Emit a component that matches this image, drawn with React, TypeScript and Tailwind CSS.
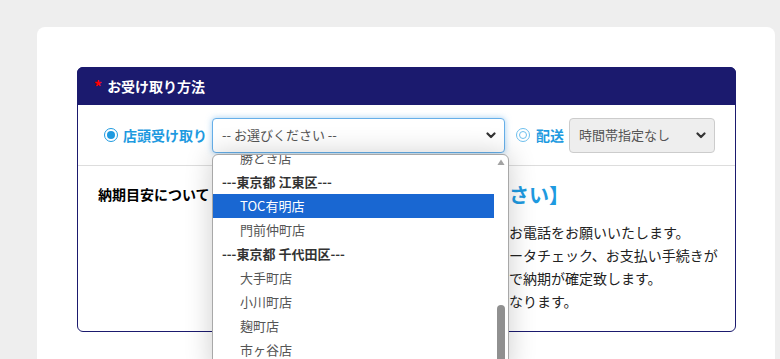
import React from "react";

const FONT = { fontFamily: '"Noto Sans CJK JP", "Noto Sans", sans-serif' };

function Chevron({ className = "" }: { className?: string }) {
  return (
    <svg width="10" height="7" viewBox="0 0 10 7" className={className}>
      <path d="M1.5 1.5 L5 5 L8.5 1.5" fill="none" stroke="#333" strokeWidth="2.2" strokeLinecap="round" strokeLinejoin="round" />
    </svg>
  );
}

type Opt = { label: string; group?: boolean; active?: boolean };
const options: Opt[] = [
  { label: "勝どき店" },
  { label: "---東京都 江東区---", group: true },
  { label: "TOC有明店", active: true },
  { label: "門前仲町店" },
  { label: "---東京都 千代田区---", group: true },
  { label: "大手町店" },
  { label: "小川町店" },
  { label: "麹町店" },
  { label: "市ヶ谷店" },
  { label: "神田店" },
];

export default function App() {
  return (
    <div className="w-[780px] h-[359px] overflow-hidden bg-[#eeeeee] pt-[27px] pl-[37px]" style={FONT}>
      <div className="w-[738px] h-[400px] bg-white rounded-[8px] pt-[40px] pl-[40px]">
        <div className="w-[659px] h-[265px] border border-[#1b1a6e] rounded-[6px] flex flex-col">
          <div className="h-[38px] -mx-px -mt-px bg-[#1b1a6e] rounded-t-[6px] flex items-center pl-[17px] text-white font-bold text-[14px]">
            <span className="text-[#ff0000] text-[16px] mr-[5px]">*</span>
            <span>お受け取り方法</span>
          </div>
          <div className="h-[61px] border-b border-[#dddddd] flex items-center pl-[26px]">
            <span className="w-[14px] h-[14px] rounded-full border-[1.5px] border-[#1e9ae0] flex items-center justify-center">
              <span className="w-[8px] h-[8px] rounded-full bg-[#1e9ae0]" />
            </span>
            <span className="ml-[5px] text-[14px] font-bold text-[#1e9ae0]">店頭受け取り</span>
            <div className="relative ml-[5px]">
              <div className="w-[293px] h-[35px] rounded-[4px] border border-[#66afe9] shadow-[0_0_6px_rgba(102,175,233,0.6)] flex items-center justify-between pl-[9px] pr-[8px] text-[13px] text-[#555555] bg-white">
                <span>-- お選びください --</span>
                <Chevron />
              </div>
              <div className="absolute left-0 top-[36px] w-[297px] h-[220px] bg-white border border-[#a8a8a8] rounded-[6px] shadow-[0_0_28px_rgba(0,0,0,0.2)] overflow-hidden z-10 flex">
                <div className="flex-1 overflow-hidden">
                  <div className="-mt-[9px]">
                    {options.map((o) => (
                      <div
                        key={o.label}
                        className={
                          "h-[24px] flex items-center text-[13px] " +
                          (o.active
                            ? "bg-[#1967d2] text-white pl-[27px]"
                            : o.group
                            ? "text-[#333333] font-semibold pl-[9px]"
                            : "text-[#555555] pl-[27px]")
                        }
                      >
                        {o.label}
                      </div>
                    ))}
                  </div>
                </div>
                <div className="w-[14px] flex flex-col items-center pt-[4px]">
                  <svg width="10" height="8" viewBox="0 0 10 8">
                    <path d="M5 0.5 L9.5 7.5 L0.5 7.5 Z" fill="#a3a3a3" />
                  </svg>
                  <div className="mt-[140px] w-[8px] h-[80px] rounded-full bg-[#909090]" />
                </div>
              </div>
            </div>
            <span className="ml-[11px] w-[14px] h-[14px] rounded-full border-[1.5px] border-[#6ec0ee] flex items-center justify-center">
              <span className="w-[8px] h-[8px] rounded-full border border-[#6ec0ee]" />
            </span>
            <span className="ml-[6px] text-[14px] font-bold text-[#1e9ae0]">配送</span>
            <div className="ml-[5px] w-[146px] h-[35px] rounded-[4px] border border-[#cccccc] bg-[#eeeeee] flex items-center justify-between pl-[9px] pr-[8px] text-[13px] text-[#555555]">
              <span>時間帯指定なし</span>
              <Chevron />
            </div>
          </div>
          <div className="flex pt-[15px]">
            <div className="w-[431px] pl-[20px] pt-[3px] text-[14px] font-bold text-black">納期目安について</div>
            <div className="flex flex-col">
              <div className="text-[20px] font-bold text-[#1e9ae0] leading-[28px]">さい】</div>
              <div className="mt-[12px] text-[14px] text-[#222222] leading-[23px]">
                <div>お電話をお願いいたします。</div>
                <div>ータチェック、お支払い手続きが</div>
                <div>で納期が確定致します。</div>
                <div>なります。</div>
              </div>
            </div>
          </div>
        </div>
      </div>
    </div>
  );
}
